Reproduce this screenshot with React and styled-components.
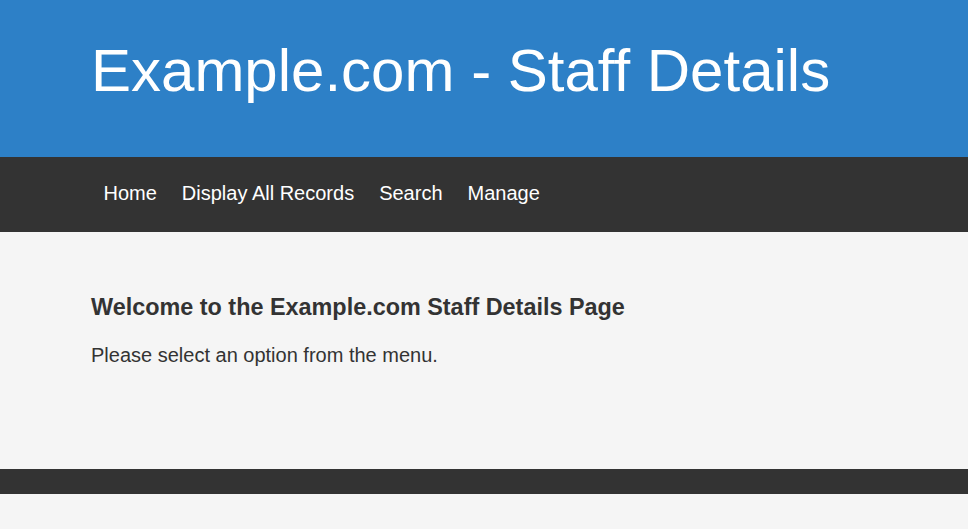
import React from 'react';
import styled, { createGlobalStyle } from 'styled-components';

const GlobalStyle = createGlobalStyle`
  html, body {
    margin: 0;
    padding: 0;
    background: #f5f5f5;
    font-family: "Liberation Sans", Arial, sans-serif;
    color: #333;
  }
`;

const links = ['Home', 'Display All Records', 'Search', 'Manage'];

const App = () => (
  <>
    <GlobalStyle />
    <Header>
      <Title>Example.com - Staff Details</Title>
    </Header>
    <Nav>
      {links.map(l => (
        <NavLink key={l} href="#">{l}</NavLink>
      ))}
    </Nav>
    <Main>
      <Heading>Welcome to the Example.com Staff Details Page</Heading>
      <Text>Please select an option from the menu.</Text>
    </Main>
    <Footer />
  </>
);

const Header = styled.header`
  background: #2d80c7;
  height: 157px;
  padding: 0 91px;
  box-sizing: border-box;
  display: flex;
  align-items: center;
`;

const Title = styled.h1`
  margin: 0;
  color: #fff;
  font-weight: normal;
  font-size: 60px;
  line-height: 1;
  margin-top: -16px;
`;

const Nav = styled.nav`
  background: #333;
  height: 75px;
  padding: 0 91px;
  display: flex;
  align-items: center;
`;

const NavLink = styled.a`
  color: #fff;
  text-decoration: none;
  font-size: 20px;
  padding: 0 12.5px;
  margin-top: -2px;
`;

const Main = styled.main`
  height: 237px;
  box-sizing: border-box;
  padding: 60px 91px 0;
`;

const Heading = styled.h2`
  margin: 0;
  font-size: 23.4px;
  font-weight: bold;
  line-height: 30px;
`;

const Text = styled.p`
  margin: 21px 0 0;
  font-size: 20px;
  line-height: 24px;
`;

const Footer = styled.footer`
  background: #333;
  height: 25px;
`;

export default App;
